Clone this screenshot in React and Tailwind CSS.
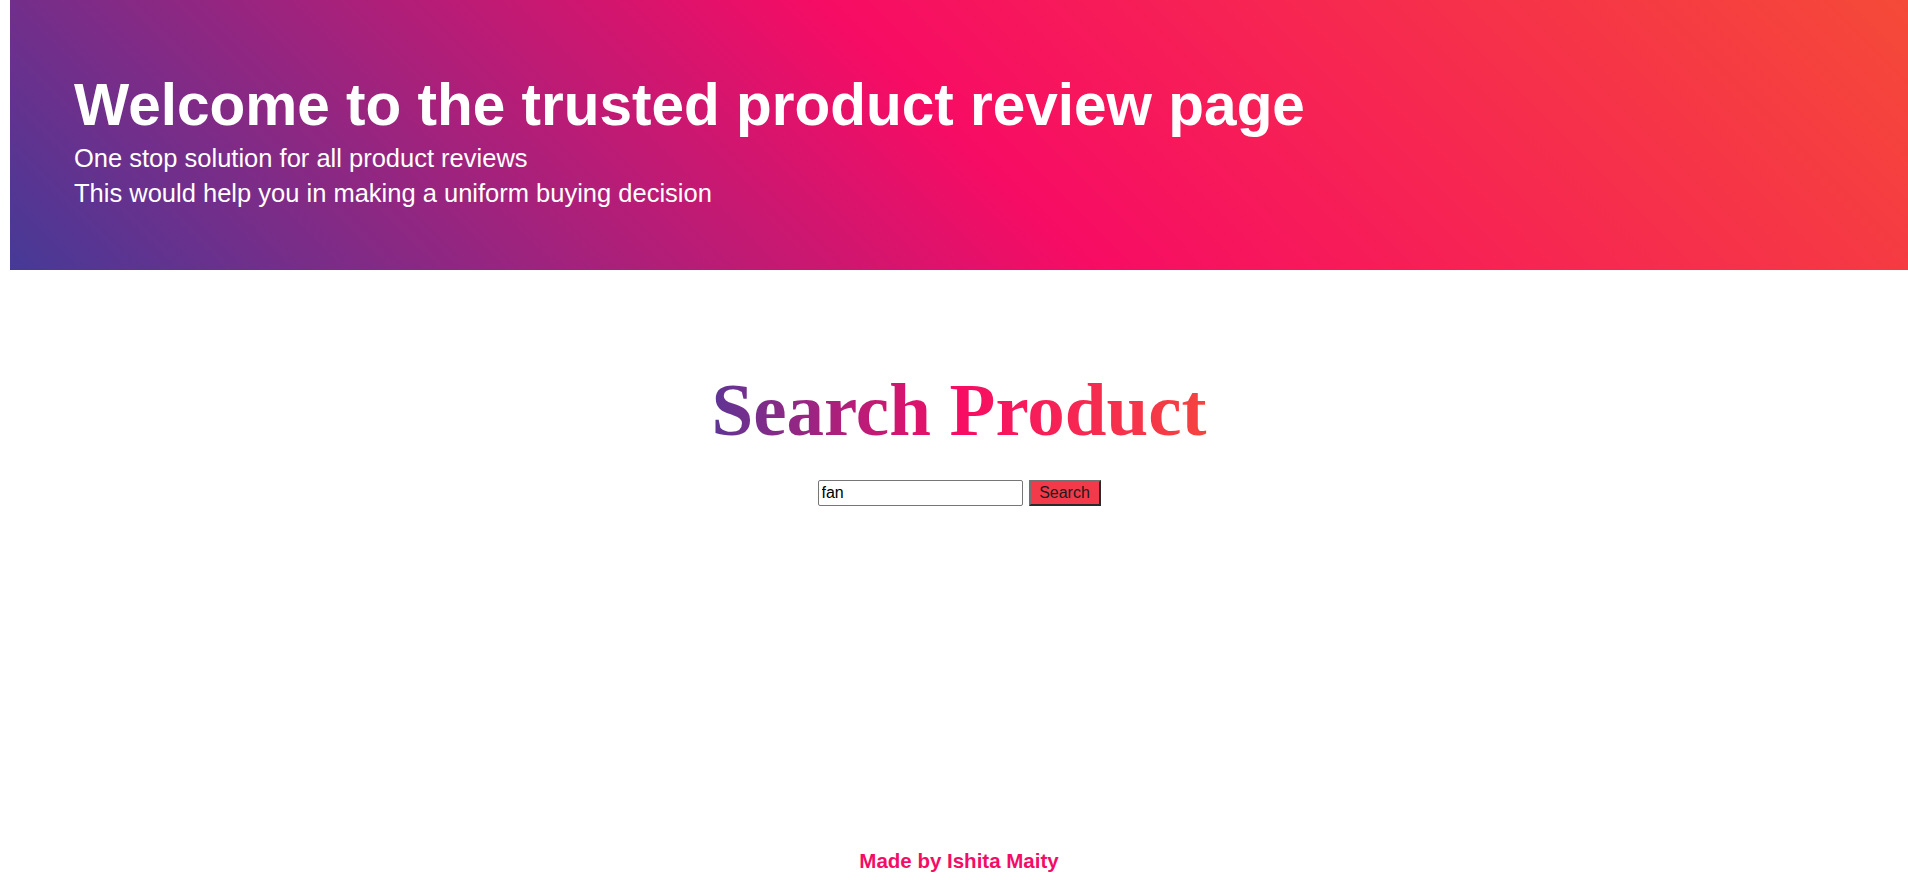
export default function App() {
  return (
    <div className="min-h-[880px] w-full bg-white flex flex-col">
      <header className="ml-[10px] h-[270px] shrink-0 bg-[linear-gradient(45deg,#463a97_0%,#f70c64_50%,#f54a38_100%)] pl-[64px] pt-[73px] font-['Liberation_Sans',Arial,sans-serif] text-white">
        <h1 className="m-0 text-[58.5px] font-bold leading-[64px] tracking-normal">
          Welcome to the trusted product review page
        </h1>
        <p className="mt-[4px] text-[25.5px] leading-[35px]">
          One stop solution for all product reviews
          <br />
          This would help you in making a uniform buying decision
        </p>
      </header>

      <main className="ml-[10px] flex flex-col items-center pt-[95px]">
        <h2 className="inline-block bg-[linear-gradient(90deg,#5e3594_0%,#f70c64_50%,#f5443f_100%)] bg-clip-text font-['Liberation_Serif','Times_New_Roman',serif] text-[75px] font-bold leading-[90px] text-transparent">
          Search Product
        </h2>
        <form
          className="mt-[25px] flex items-center gap-[6px]"
          onSubmit={(e) => e.preventDefault()}
        >
          <input
            type="text"
            defaultValue="fan"
            className="h-[26px] w-[205px] rounded-[2px] border border-[#767676] bg-white px-[3px] font-['Liberation_Sans',Arial,sans-serif] text-[16px] text-black outline-none"
          />
          <button
            type="submit"
            className="h-[26px] w-[72px] border-2 border-solid border-t-[#727272] border-l-[#727272] border-r-[#2a2a2a] border-b-[#2a2a2a] bg-[#f33a4a] p-0 font-['Liberation_Sans',Arial,sans-serif] text-[16px] leading-[20px] text-[#1a1a1a]"
          >
            Search
          </button>
        </form>
      </main>

      <footer className="ml-[10px] mt-[343px] text-center font-['Liberation_Sans',Arial,sans-serif] text-[20.5px] font-bold leading-[24px] text-[#f30d67]">
        Made by Ishita Maity
      </footer>
    </div>
  );
}
